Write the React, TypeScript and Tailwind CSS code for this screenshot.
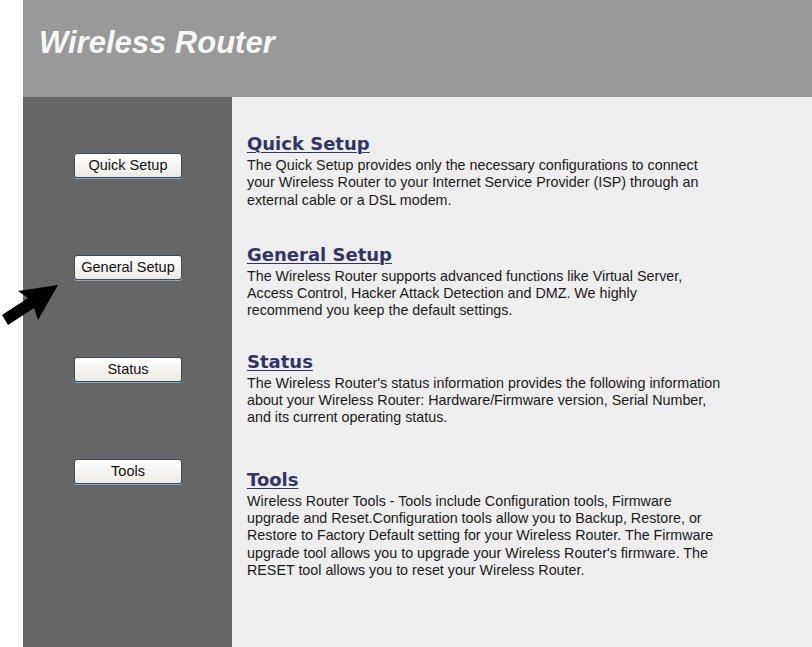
const sections = [
  {
    title: "Quick Setup",
    gap: "mt-0",
    lines: [
      "The Quick Setup provides only the necessary configurations to connect",
      "your Wireless Router to your Internet Service Provider (ISP) through an",
      "external cable or a DSL modem.",
    ],
  },
  {
    title: "General Setup",
    gap: "mt-[35px]",
    lines: [
      "The Wireless Router supports advanced functions like Virtual Server,",
      "Access Control, Hacker Attack Detection and DMZ. We highly",
      "recommend you keep the default settings.",
    ],
  },
  {
    title: "Status",
    gap: "mt-[31px]",
    lines: [
      "The Wireless Router's status information provides the following information",
      "about your Wireless Router: Hardware/Firmware version, Serial Number,",
      "and its current operating status.",
    ],
  },
  {
    title: "Tools",
    gap: "mt-[42px]",
    lines: [
      "Wireless Router Tools - Tools include Configuration tools, Firmware",
      "upgrade and Reset.Configuration tools allow you to Backup, Restore, or",
      "Restore to Factory Default setting for your Wireless Router. The Firmware",
      "upgrade tool allows you to upgrade your Wireless Router's firmware. The",
      "RESET tool allows you to reset your Wireless Router.",
    ],
  },
];

const menu = ["Quick Setup", "General Setup", "Status", "Tools"];

export default function App() {
  return (
    <div className="relative flex w-[812px] h-[647px] overflow-hidden bg-white font-['Liberation_Sans',Arial,sans-serif]">
      {/* white strip on the left */}
      <div className="w-[23px] shrink-0 bg-white" />

      <div className="flex flex-1 flex-col">
        {/* header */}
        <div className="h-[97px] shrink-0 bg-[#999999] pl-[16px] pt-[27px]">
          <h1 className="text-[31px] leading-[31px] font-bold italic text-[#f7f7f7]">
            Wireless Router
          </h1>
        </div>

        <div className="flex flex-1">
          {/* sidebar */}
          <div className="w-[209px] shrink-0 bg-[#666666] flex flex-col items-center pt-[56px] gap-[77px]">
            {menu.map((m) => (
              <button
                key={m}
                className="w-[108px] h-[25px] rounded-[3px] border border-[#3d4a57] bg-gradient-to-b from-white to-[#ebeae4] text-[14.5px] leading-none text-[#111] shadow-[0_1px_0_#8ea4bb] pl-[1px]"
              >
                {m}
              </button>
            ))}
          </div>

          {/* content */}
          <div className="flex-1 bg-[#eeeeee] pl-[15px] pt-[36px]">
            {sections.map((s) => (
              <div key={s.title} className={s.gap}>
                <h2 className="font-['DejaVu_Sans',Verdana,sans-serif] text-[18px] leading-[22px] font-bold text-[#333366] underline underline-offset-[2px] decoration-[1px]">
                  {s.title}
                </h2>
                <p className="mt-[2px] text-[14.3px] leading-[17.3px] text-[#1a1a1a] whitespace-nowrap">
                  {s.lines.map((l, i) => (
                    <span key={i} className="block">
                      {l}
                    </span>
                  ))}
                </p>
              </div>
            ))}
          </div>
        </div>
      </div>

      {/* pointer arrow over the sidebar */}
      <svg
        className="absolute left-0 top-0"
        width="70"
        height="340"
        viewBox="0 0 70 340"
      >
        <polygon
          points="58,285 18,291 28,298 2,315 8,325 34,308 38,320"
          fill="#000"
        />
      </svg>
    </div>
  );
}
